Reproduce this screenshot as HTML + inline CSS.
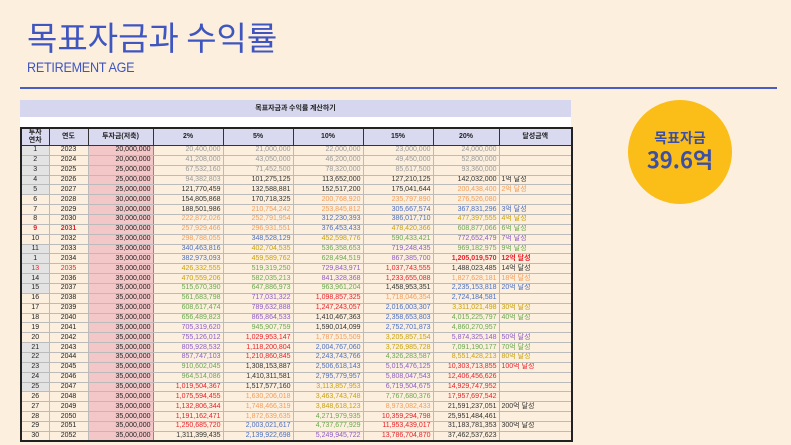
<!DOCTYPE html>
<html><head><meta charset="utf-8"><style>
*{margin:0;padding:0;box-sizing:border-box}
body{width:791px;height:445px;background:#fcefdd;font-family:"Liberation Sans","Noto Sans CJK KR",sans-serif;position:relative;overflow:hidden}
.t1{position:absolute;left:27px;top:15px;font-size:33px;color:#3f55c0;font-family:"Noto Sans CJK KR",sans-serif;font-weight:400;line-height:42px}
.t2{position:absolute;left:27px;top:59px;font-size:14px;color:#3f55c0;letter-spacing:-0.3px;transform:scaleX(0.9);transform-origin:left}
.line{position:absolute;left:20px;top:87px;width:757px;height:2px;background:#4a5dc2}
.band{position:absolute;left:20px;top:100px;width:551px;height:17px;background:#d6d6ee;font-size:7px;font-weight:bold;text-align:center;line-height:17px;font-family:"Noto Sans CJK KR",sans-serif;color:#222}
.blank{position:absolute;left:20px;top:117px;width:551px;height:10px;background:#fff}
table{position:absolute;left:20px;top:127px;width:551px;border-collapse:collapse;table-layout:fixed;font-size:7px;font-family:"Liberation Sans","Noto Sans CJK KR",sans-serif;border:2px solid #222}
th{height:17px;background:#d9d9f0;border:1px solid #333;font-size:7px;font-weight:bold;color:#222;line-height:8px}
td{height:9.86px;border:1px solid #bbb;line-height:8px;padding:0 2px;white-space:nowrap;overflow:hidden;text-align:right;color:#222}
td.c{text-align:center}
td.inv{background:#f3c6c8;border-right:1px solid #888}
td.l{text-align:left}
tr.gy td:first-child{background:#e3e3e3}
.g{color:#9a9a9a}.k{color:#333}.o{color:#f39c5a}.b{color:#4a6fc4}.y{color:#c9a10a}.gr{color:#6aa84f}.p{color:#8e5cc8}.r{color:#e8202a}
.circle{position:absolute;left:628px;top:100px;width:104px;height:104px;border-radius:50%;background:#fbbd17;text-align:center;color:#3b4fa6;font-family:"Noto Sans CJK KR",sans-serif;font-weight:bold}
.circle .a{margin-top:30px;font-size:14px;line-height:16px}
.circle .n{font-size:22px;line-height:26px}
</style></head><body>
<div class="t1">목표자금과 수익률</div>
<div class="t2">RETIREMENT AGE</div>
<div class="line"></div>
<div class="band">목표자금과 수익률 계산하기</div>
<div class="blank"></div>
<table>
<colgroup><col style="width:28px"><col style="width:39px"><col style="width:65px"><col style="width:70px"><col style="width:70px"><col style="width:70px"><col style="width:70px"><col style="width:66px"><col style="width:73px"></colgroup>
<tr><th>투자<br>연차</th><th>연도</th><th>투자금(저축)</th><th>2%</th><th>5%</th><th>10%</th><th>15%</th><th>20%</th><th>달성금액</th></tr>
<tr class="gy"><td class="c">1</td><td class="c">2023</td><td class="inv">20,000,000</td><td class="g">20,400,000</td><td class="g">21,000,000</td><td class="g">22,000,000</td><td class="g">23,000,000</td><td class="g">24,000,000</td><td class="l"></td></tr>
<tr class="gy"><td class="c">2</td><td class="c">2024</td><td class="inv">20,000,000</td><td class="g">41,208,000</td><td class="g">43,050,000</td><td class="g">46,200,000</td><td class="g">49,450,000</td><td class="g">52,800,000</td><td class="l"></td></tr>
<tr class="gy"><td class="c">3</td><td class="c">2025</td><td class="inv">25,000,000</td><td class="g">67,532,160</td><td class="g">71,452,500</td><td class="g">78,320,000</td><td class="g">85,617,500</td><td class="g">93,360,000</td><td class="l"></td></tr>
<tr class="gy"><td class="c">4</td><td class="c">2026</td><td class="inv">25,000,000</td><td class="g">94,382,803</td><td class="k">101,275,125</td><td class="k">113,652,000</td><td class="k">127,210,125</td><td class="k">142,032,000</td><td class="l k">1억 달성</td></tr>
<tr class="gy"><td class="c">5</td><td class="c">2027</td><td class="inv">25,000,000</td><td class="k">121,770,459</td><td class="k">132,588,881</td><td class="k">152,517,200</td><td class="k">175,041,644</td><td class="o">200,438,400</td><td class="l o">2억 달성</td></tr>
<tr><td class="c">6</td><td class="c">2028</td><td class="inv">30,000,000</td><td class="k">154,805,868</td><td class="k">170,718,325</td><td class="o">200,768,920</td><td class="o">235,797,890</td><td class="o">276,526,080</td><td class="l"></td></tr>
<tr><td class="c">7</td><td class="c">2029</td><td class="inv">30,000,000</td><td class="k">188,501,986</td><td class="o">210,754,242</td><td class="o">253,845,812</td><td class="b">305,667,574</td><td class="b">367,831,296</td><td class="l b">3억 달성</td></tr>
<tr><td class="c">8</td><td class="c">2030</td><td class="inv">30,000,000</td><td class="o">222,872,026</td><td class="o">252,791,954</td><td class="b">312,230,393</td><td class="b">386,017,710</td><td class="y">477,397,555</td><td class="l y">4억 달성</td></tr>
<tr><td class="c r"><b>9</b></td><td class="c r"><b>2031</b></td><td class="inv">30,000,000</td><td class="o">257,929,466</td><td class="o">296,931,551</td><td class="b">376,453,433</td><td class="y">478,420,366</td><td class="gr">608,877,066</td><td class="l gr">6억 달성</td></tr>
<tr><td class="c">10</td><td class="c">2032</td><td class="inv">35,000,000</td><td class="o">298,788,055</td><td class="b">348,528,129</td><td class="y">452,598,776</td><td class="gr">590,433,421</td><td class="p">772,652,479</td><td class="l p">7억 달성</td></tr>
<tr class="gy"><td class="c">11</td><td class="c">2033</td><td class="inv">35,000,000</td><td class="b">340,463,816</td><td class="y">402,704,535</td><td class="gr">536,358,653</td><td class="p">719,248,435</td><td class="gr">969,182,975</td><td class="l gr">9억 달성</td></tr>
<tr class="gy"><td class="c">1</td><td class="c">2034</td><td class="inv">35,000,000</td><td class="b">382,973,093</td><td class="y">459,589,762</td><td class="gr">628,494,519</td><td class="p">867,385,700</td><td class="r"><b>1,205,019,570</b></td><td class="l r"><b>12억 달성</b></td></tr>
<tr class="gy"><td class="c r">13</td><td class="c r">2035</td><td class="inv">35,000,000</td><td class="y">426,332,555</td><td class="gr">519,319,250</td><td class="p">729,843,971</td><td class="r">1,037,743,555</td><td class="k">1,488,023,485</td><td class="l k">14억 달성</td></tr>
<tr class="gy"><td class="c">14</td><td class="c">2036</td><td class="inv">35,000,000</td><td class="y">470,559,206</td><td class="gr">582,035,213</td><td class="p">841,328,368</td><td class="r">1,233,655,088</td><td class="o">1,827,628,181</td><td class="l o">18억 달성</td></tr>
<tr class="gy"><td class="c">15</td><td class="c">2037</td><td class="inv">35,000,000</td><td class="gr">515,670,390</td><td class="gr">647,886,973</td><td class="gr">963,961,204</td><td class="k">1,458,953,351</td><td class="b">2,235,153,818</td><td class="l b">20억 달성</td></tr>
<tr><td class="c">16</td><td class="c">2038</td><td class="inv">35,000,000</td><td class="gr">561,683,798</td><td class="p">717,031,322</td><td class="r">1,098,857,325</td><td class="o">1,718,046,354</td><td class="b">2,724,184,581</td><td class="l"></td></tr>
<tr><td class="c">17</td><td class="c">2039</td><td class="inv">35,000,000</td><td class="gr">608,617,474</td><td class="p">789,632,888</td><td class="r">1,247,243,057</td><td class="b">2,016,003,307</td><td class="y">3,311,021,498</td><td class="l y">30억 달성</td></tr>
<tr><td class="c">18</td><td class="c">2040</td><td class="inv">35,000,000</td><td class="gr">656,489,823</td><td class="p">865,864,533</td><td class="k">1,410,467,363</td><td class="b">2,358,653,803</td><td class="gr">4,015,225,797</td><td class="l gr">40억 달성</td></tr>
<tr><td class="c">19</td><td class="c">2041</td><td class="inv">35,000,000</td><td class="p">705,319,620</td><td class="gr">945,907,759</td><td class="k">1,590,014,099</td><td class="b">2,752,701,873</td><td class="gr">4,860,270,957</td><td class="l"></td></tr>
<tr><td class="c">20</td><td class="c">2042</td><td class="inv">35,000,000</td><td class="p">755,126,012</td><td class="r">1,029,953,147</td><td class="o">1,787,515,509</td><td class="y">3,205,857,154</td><td class="p">5,874,325,148</td><td class="l p">50억 달성</td></tr>
<tr class="gy"><td class="c">21</td><td class="c">2043</td><td class="inv">35,000,000</td><td class="p">805,928,532</td><td class="r">1,118,200,804</td><td class="b">2,004,767,060</td><td class="y">3,726,985,728</td><td class="gr">7,091,190,177</td><td class="l gr">70억 달성</td></tr>
<tr class="gy"><td class="c">22</td><td class="c">2044</td><td class="inv">35,000,000</td><td class="p">857,747,103</td><td class="r">1,210,860,845</td><td class="b">2,243,743,766</td><td class="gr">4,326,283,587</td><td class="y">8,551,428,213</td><td class="l y">80억 달성</td></tr>
<tr class="gy"><td class="c">23</td><td class="c">2045</td><td class="inv">35,000,000</td><td class="gr">910,602,045</td><td class="k">1,308,153,887</td><td class="b">2,506,618,143</td><td class="p">5,015,476,125</td><td class="r">10,303,713,855</td><td class="l r">100억 달성</td></tr>
<tr class="gy"><td class="c">24</td><td class="c">2046</td><td class="inv">35,000,000</td><td class="gr">964,514,086</td><td class="k">1,410,311,581</td><td class="b">2,795,779,957</td><td class="p">5,808,047,543</td><td class="r">12,406,456,626</td><td class="l"></td></tr>
<tr class="gy"><td class="c">25</td><td class="c">2047</td><td class="inv">35,000,000</td><td class="r">1,019,504,367</td><td class="k">1,517,577,160</td><td class="y">3,113,857,953</td><td class="p">6,719,504,675</td><td class="r">14,929,747,952</td><td class="l"></td></tr>
<tr><td class="c">26</td><td class="c">2048</td><td class="inv">35,000,000</td><td class="r">1,075,594,455</td><td class="o">1,630,206,018</td><td class="y">3,463,743,748</td><td class="gr">7,767,680,376</td><td class="r">17,957,697,542</td><td class="l"></td></tr>
<tr><td class="c">27</td><td class="c">2049</td><td class="inv">35,000,000</td><td class="r">1,132,806,344</td><td class="o">1,748,466,319</td><td class="y">3,848,618,123</td><td class="o">8,973,082,433</td><td class="k">21,591,237,051</td><td class="l k">200억 달성</td></tr>
<tr><td class="c">28</td><td class="c">2050</td><td class="inv">35,000,000</td><td class="r">1,191,162,471</td><td class="o">1,872,639,635</td><td class="gr">4,271,979,935</td><td class="r">10,359,294,798</td><td class="k">25,951,484,461</td><td class="l"></td></tr>
<tr><td class="c">29</td><td class="c">2051</td><td class="inv">35,000,000</td><td class="r">1,250,685,720</td><td class="b">2,003,021,617</td><td class="gr">4,737,677,929</td><td class="r">11,953,439,017</td><td class="k">31,183,781,353</td><td class="l k">300억 달성</td></tr>
<tr><td class="c">30</td><td class="c">2052</td><td class="inv">35,000,000</td><td class="k">1,311,399,435</td><td class="b">2,139,922,698</td><td class="p">5,249,945,722</td><td class="r">13,786,704,870</td><td class="k">37,462,537,623</td><td class="l"></td></tr>
</table>
<div class="circle"><div class="a">목표자금</div><div class="n">39.6억</div></div>
</body></html>
